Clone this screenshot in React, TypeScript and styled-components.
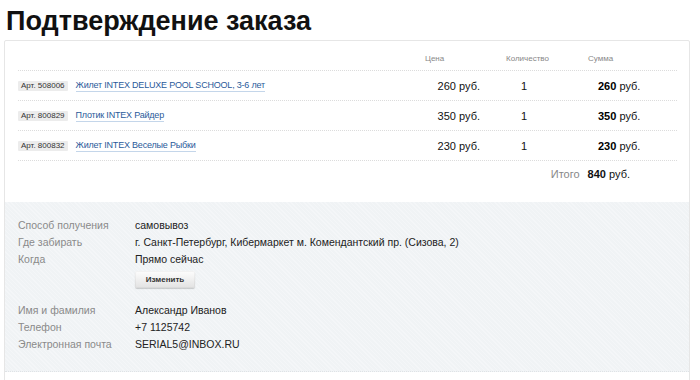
import React from "react";
import styled, { createGlobalStyle } from "styled-components";

const Global = createGlobalStyle`
  html, body { margin: 0; padding: 0; background: #fff; overflow: hidden; }
  body { font-family: "Liberation Sans", Arial, sans-serif; color: #222; }
`;

const Page = styled.div`
  padding: 6px 10px 0 4px;
  width: 700px;
  height: 380px;
  overflow: hidden;
  box-sizing: border-box;
`;

const Title = styled.h1`
  margin: 0 0 4px 2px;
  font-size: 27px;
  line-height: 30px;
  font-weight: bold;
  color: #111;
`;

const Card = styled.div`
  border: 1px solid #e6e6e6;
  border-radius: 2px;
  width: 686px;
  box-sizing: border-box;
  height: 360px;
`;

const Table = styled.div`
  padding: 0 12px 0 13px;
`;

const Row = styled.div<{ $head?: boolean }>`
  display: grid;
  grid-template-columns: 1fr 70px 90px 102px;
  align-items: ${(p) => (p.$head ? "end" : "center")};
  height: 29px;
  border-bottom: 1px dotted #dcdcdc;
`;

const HeadCell = styled.div<{ $pl: number }>`
  font-size: 8px;
  color: #888;
  line-height: 12px;
  padding: 0 0 5px ${(p) => p.$pl}px;
`;

const NameCell = styled.div`
  display: flex;
  align-items: center;
  gap: 8px;
`;

const Badge = styled.span`
  background: #ececec;
  color: #333;
  font-size: 8px;
  line-height: 10px;
  padding: 0 3px;
  border-radius: 1px;
`;

const Link = styled.a`
  color: #2a5a9a;
  font-size: 9px;
  letter-spacing: -0.2px;
  text-decoration: none;
  border-bottom: 1px solid #c4d6ea;
  line-height: 12px;
  cursor: pointer;
`;

const Price = styled.div`
  font-size: 11px;
  text-align: right;
  padding-right: 5px;
  color: #111;
`;

const Qty = styled.div`
  font-size: 11px;
  padding-left: 36px;
  color: #111;
`;

const Sum = styled.div`
  font-size: 11px;
  padding-left: 23px;
  color: #111;
  b { font-weight: bold; color: #000; }
`;

const TotalRow = styled.div`
  display: flex;
  justify-content: flex-end;
  align-items: flex-start;
  gap: 8px;
  padding: 7px 47px 0 0;
  height: 34px;
  line-height: 12px;
  font-size: 11px;
  color: #111;
`;

const TotalLabel = styled.span`
  color: #888;
`;

const Info = styled.div`
  background-color: #f0f3f5;
  background-image: repeating-linear-gradient(45deg, rgba(255,255,255,0.25) 0 1px, transparent 1px 3px);
  padding: 15px 0 18px 13px;
  border-bottom: 1px dotted #dfe3e6;
`;

const InfoGroup = styled.div`
  display: grid;
  grid-template-columns: 117px 1fr;
  & + & { margin-top: 14px; }
`;

const Label = styled.div`
  font-size: 10.5px;
  line-height: 17px;
  color: #8a8a8a;
`;

const Value = styled.div`
  font-size: 10.5px;
  line-height: 17px;
  color: #222;
`;

const ButtonWrap = styled.div`
  grid-column: 2;
  display: flex;
  padding-top: 3px;
`;

const Button = styled.button`
  width: 60px;
  height: 17px;
  padding: 0;
  font-family: "Liberation Sans", Arial, sans-serif;
  font-size: 8px;
  font-weight: bold;
  color: #333;
  border: none;
  border-radius: 2px;
  background: linear-gradient(#fdfdfd, #e2e2e2);
  box-shadow: 0 1px 1px rgba(0,0,0,0.18), inset 0 0 0 1px rgba(0,0,0,0.04);
  cursor: pointer;
`;

const items = [
  { art: "508006", name: "Жилет INTEX DELUXE POOL SCHOOL, 3-6 лет", price: 260 },
  { art: "800829", name: "Плотик INTEX Райдер", price: 350 },
  { art: "800832", name: "Жилет INTEX Веселые Рыбки", price: 230 },
];

export default function App() {
  return (
    <Page>
      <Global />
      <Title>Подтверждение заказа</Title>
      <Card>
        <Table>
          <Row $head>
            <div />
            <HeadCell $pl={10}>Цена</HeadCell>
            <HeadCell $pl={21}>Количество</HeadCell>
            <HeadCell $pl={13}>Сумма</HeadCell>
          </Row>
          {items.map((it) => (
            <Row key={it.art}>
              <NameCell>
                <Badge>Арт. {it.art}</Badge>
                <Link>{it.name}</Link>
              </NameCell>
              <Price>{it.price} руб.</Price>
              <Qty>1</Qty>
              <Sum>
                <b>{it.price}</b> руб.
              </Sum>
            </Row>
          ))}
          <TotalRow>
            <TotalLabel>Итого</TotalLabel>
            <span>
              <b>840</b> руб.
            </span>
          </TotalRow>
        </Table>
        <Info>
          <InfoGroup>
            <Label>Способ получения</Label>
            <Value>самовывоз</Value>
            <Label>Где забирать</Label>
            <Value>г. Санкт-Петербург, Кибермаркет м. Комендантский пр. (Сизова, 2)</Value>
            <Label>Когда</Label>
            <Value>Прямо сейчас</Value>
            <ButtonWrap>
              <Button>Изменить</Button>
            </ButtonWrap>
          </InfoGroup>
          <InfoGroup>
            <Label>Имя и фамилия</Label>
            <Value>Александр Иванов</Value>
            <Label>Телефон</Label>
            <Value>+7 1125742</Value>
            <Label>Электронная почта</Label>
            <Value>SERIAL5@INBOX.RU</Value>
          </InfoGroup>
        </Info>
      </Card>
    </Page>
  );
}
